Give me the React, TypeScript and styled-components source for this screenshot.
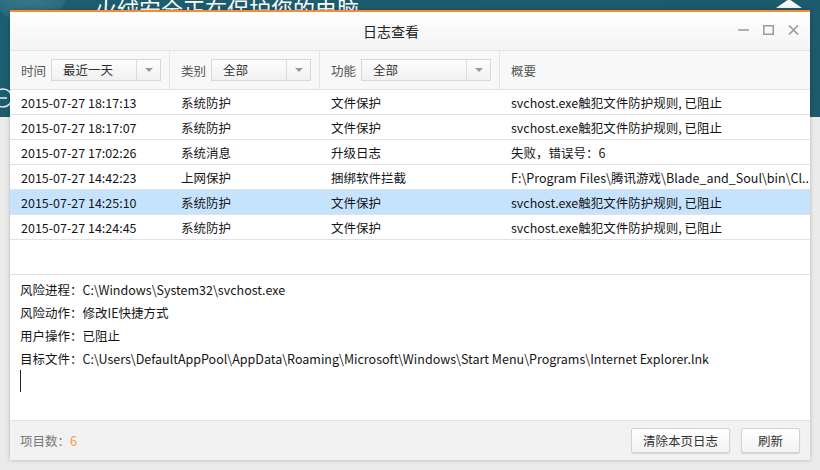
import styled, { createGlobalStyle } from "styled-components";

const GlobalStyle = createGlobalStyle`
  html, body {
    margin: 0;
    padding: 0;
  }
  body {
    font-family: "Noto Sans CJK SC", "Noto Sans", sans-serif;
    font-size: 12.5px;
    color: #222;
  }
  * {
    box-sizing: border-box;
  }
`;

const Desktop = styled.div`
  position: relative;
  width: 820px;
  height: 470px;
  overflow: hidden;
  background: #ebebeb;
`;

const TopBand = styled.div`
  height: 122px;
  background: radial-gradient(circle at 30px -10px, #3b7d8f 0, #2a6b7e 38px, #1d5d70 40px, #1c5a6d 100%);
  position: relative;
`;

const BrandText = styled.div`
  padding: 0 0 0 95px;
  margin-top: -5px;
  font-size: 22px;
  line-height: 26px;
  color: #ffffff;
`;

const SideCircle = styled.svg`
  position: absolute;
  left: -8px;
  top: 92px;
`;

const RoofIcon = styled.svg`
  position: absolute;
  right: 18px;
  top: 3px;
`;

const Window = styled.div`
  position: absolute;
  left: 10px;
  top: 10px;
  width: 800px;
  height: 450px;
  display: flex;
  flex-direction: column;
  background: #fff;
  border-top: 2px solid #fb8a2e;
  box-shadow: 0 0 4px rgba(0, 0, 0, 0.25);
`;

const TitleBar = styled.div`
  height: 39px;
  flex: none;
  position: relative;
  display: flex;
  align-items: center;
  justify-content: center;
  padding-right: 38px;
  background: linear-gradient(#ffffff, #f4f4f4);
  border-bottom: 1px solid #e4e4e4;
`;

const Title = styled.div`
  font-size: 14px;
  color: #222;
  line-height: 20px;
`;

const Controls = styled.div`
  position: absolute;
  right: 11px;
  top: 13px;
  display: flex;
  gap: 14px;
  align-items: center;
`;

const ControlButton = styled.svg`
  display: block;
`;

const FilterBar = styled.div`
  height: 39px;
  flex: none;
  display: grid;
  grid-template-columns: 160px 150px 180px 1fr;
  background: #f8f8f8;
  border-bottom: 1px solid #e2e2e2;
`;

const FilterCell = styled.div<{ $last?: boolean }>`
  display: flex;
  align-items: center;
  gap: 5px;
  padding-left: 11px;
  border-right: ${(p) => (p.$last ? "none" : "1px solid #e6e6e6")};
`;

const FilterLabel = styled.span`
  color: #555;
`;

const Select = styled.div<{ $width: number }>`
  width: ${(p) => p.$width}px;
  height: 22px;
  display: flex;
  border: 1px solid #d8d8d8;
  background: linear-gradient(#fdfdfd, #f1f1f1);
`;

const SelectValue = styled.div`
  flex: 1;
  padding-left: 11px;
  line-height: 20px;
  color: #333;
`;

const SelectArrow = styled.div`
  width: 24px;
  border-left: 1px solid #dcdcdc;
  display: flex;
  align-items: center;
  justify-content: center;

  &::after {
    content: "";
    border-left: 4px solid transparent;
    border-right: 4px solid transparent;
    border-top: 4px solid #999;
  }
`;

const TableArea = styled.div`
  height: 185px;
  flex: none;
  border-bottom: 1px solid #e2e2e2;
`;

const Row = styled.div<{ $selected?: boolean }>`
  height: 25px;
  display: grid;
  grid-template-columns: 160px 150px 180px 1fr;
  align-items: center;
  border-bottom: 1px solid #e2e2e2;
  background: ${(p) => (p.$selected ? "#c6e3fd" : "#fff")};
  color: #151515;
`;

const Cell = styled.div`
  padding-left: 11px;
  white-space: nowrap;
  overflow: hidden;
`;

const DetailArea = styled.div`
  flex: 1;
  padding: 3px 10px 0;
  line-height: 23px;
  color: #151515;
`;

const DetailLine = styled.div`
  white-space: nowrap;
`;

const Caret = styled.div`
  width: 1px;
  height: 22px;
  background: #222;
`;

const Footer = styled.div`
  height: 40px;
  flex: none;
  display: flex;
  align-items: center;
  padding: 0 10px;
  gap: 11px;
  background: #f2f2f2;
  border-top: 1px solid #e2e2e2;
`;

const Count = styled.div`
  flex: 1;
  color: #777;
`;

const CountValue = styled.span`
  color: #f79a45;
`;

const Button = styled.button<{ $width: number }>`
  width: ${(p) => p.$width}px;
  height: 25px;
  padding: 0;
  border: 1px solid #d2d2d2;
  border-radius: 2px;
  background: linear-gradient(#ffffff, #f3f3f3);
  box-shadow: 0 1px 1px rgba(0, 0, 0, 0.12);
  font-family: inherit;
  font-size: 12.5px;
  color: #333;
`;

const logs = [
  ["2015-07-27 18:17:13", "系统防护", "文件保护", "svchost.exe触犯文件防护规则, 已阻止"],
  ["2015-07-27 18:17:07", "系统防护", "文件保护", "svchost.exe触犯文件防护规则, 已阻止"],
  ["2015-07-27 17:02:26", "系统消息", "升级日志", "失败，错误号：6"],
  ["2015-07-27 14:42:23", "上网保护", "捆绑软件拦截", "F:\\Program Files\\腾讯游戏\\Blade_and_Soul\\bin\\Cl.."],
  ["2015-07-27 14:25:10", "系统防护", "文件保护", "svchost.exe触犯文件防护规则, 已阻止"],
  ["2015-07-27 14:24:45", "系统防护", "文件保护", "svchost.exe触犯文件防护规则, 已阻止"],
];

const details = [
  "风险进程：C:\\Windows\\System32\\svchost.exe",
  "风险动作：修改IE快捷方式",
  "用户操作：已阻止",
  "目标文件：C:\\Users\\DefaultAppPool\\AppData\\Roaming\\Microsoft\\Windows\\Start Menu\\Programs\\Internet Explorer.lnk",
];

export default function App() {
  const selected = 4;

  return (
    <Desktop>
      <GlobalStyle />
      <TopBand>
        <BrandText>火绒安全正在保护您的电脑</BrandText>
        <SideCircle width="22" height="22" viewBox="0 0 22 22">
          <circle cx="11" cy="11" r="9" fill="none" stroke="#e8f0f2" strokeWidth="1.5" />
          <line x1="7" y1="11" x2="15" y2="11" stroke="#e8f0f2" strokeWidth="1.5" />
        </SideCircle>
        <RoofIcon width="26" height="10" viewBox="0 0 26 10">
          <path d="M0 10 L13 1 L26 10 Z" fill="#f4f7f8" />
        </RoofIcon>
      </TopBand>

      <Window>
        <TitleBar>
          <Title>日志查看</Title>
          <Controls>
            <ControlButton width="11" height="10" viewBox="0 0 11 10">
              <line x1="0" y1="5" x2="11" y2="5" stroke="#9a9a9a" strokeWidth="1.5" />
            </ControlButton>
            <ControlButton width="11" height="10" viewBox="0 0 11 10">
              <rect x="0.75" y="0.75" width="9.5" height="8.5" fill="none" stroke="#9a9a9a" strokeWidth="1.5" />
            </ControlButton>
            <ControlButton width="11" height="10" viewBox="0 0 11 10">
              <path d="M1 0.5 L10 9.5 M10 0.5 L1 9.5" stroke="#9a9a9a" strokeWidth="1.6" />
            </ControlButton>
          </Controls>
        </TitleBar>

        <FilterBar>
          <FilterCell>
            <FilterLabel>时间</FilterLabel>
            <Select $width={110}>
              <SelectValue>最近一天</SelectValue>
              <SelectArrow />
            </Select>
          </FilterCell>
          <FilterCell>
            <FilterLabel>类别</FilterLabel>
            <Select $width={100}>
              <SelectValue>全部</SelectValue>
              <SelectArrow />
            </Select>
          </FilterCell>
          <FilterCell>
            <FilterLabel>功能</FilterLabel>
            <Select $width={130}>
              <SelectValue>全部</SelectValue>
              <SelectArrow />
            </Select>
          </FilterCell>
          <FilterCell $last>
            <FilterLabel>概要</FilterLabel>
          </FilterCell>
        </FilterBar>

        <TableArea>
          {logs.map((log, i) => (
            <Row key={i} $selected={i === selected}>
              {log.map((text, j) => (
                <Cell key={j}>{text}</Cell>
              ))}
            </Row>
          ))}
        </TableArea>

        <DetailArea>
          {details.map((line) => (
            <DetailLine key={line}>{line}</DetailLine>
          ))}
          <Caret />
        </DetailArea>

        <Footer>
          <Count>
            项目数：<CountValue>6</CountValue>
          </Count>
          <Button $width={99}>清除本页日志</Button>
          <Button $width={59}>刷新</Button>
        </Footer>
      </Window>
    </Desktop>
  );
}
